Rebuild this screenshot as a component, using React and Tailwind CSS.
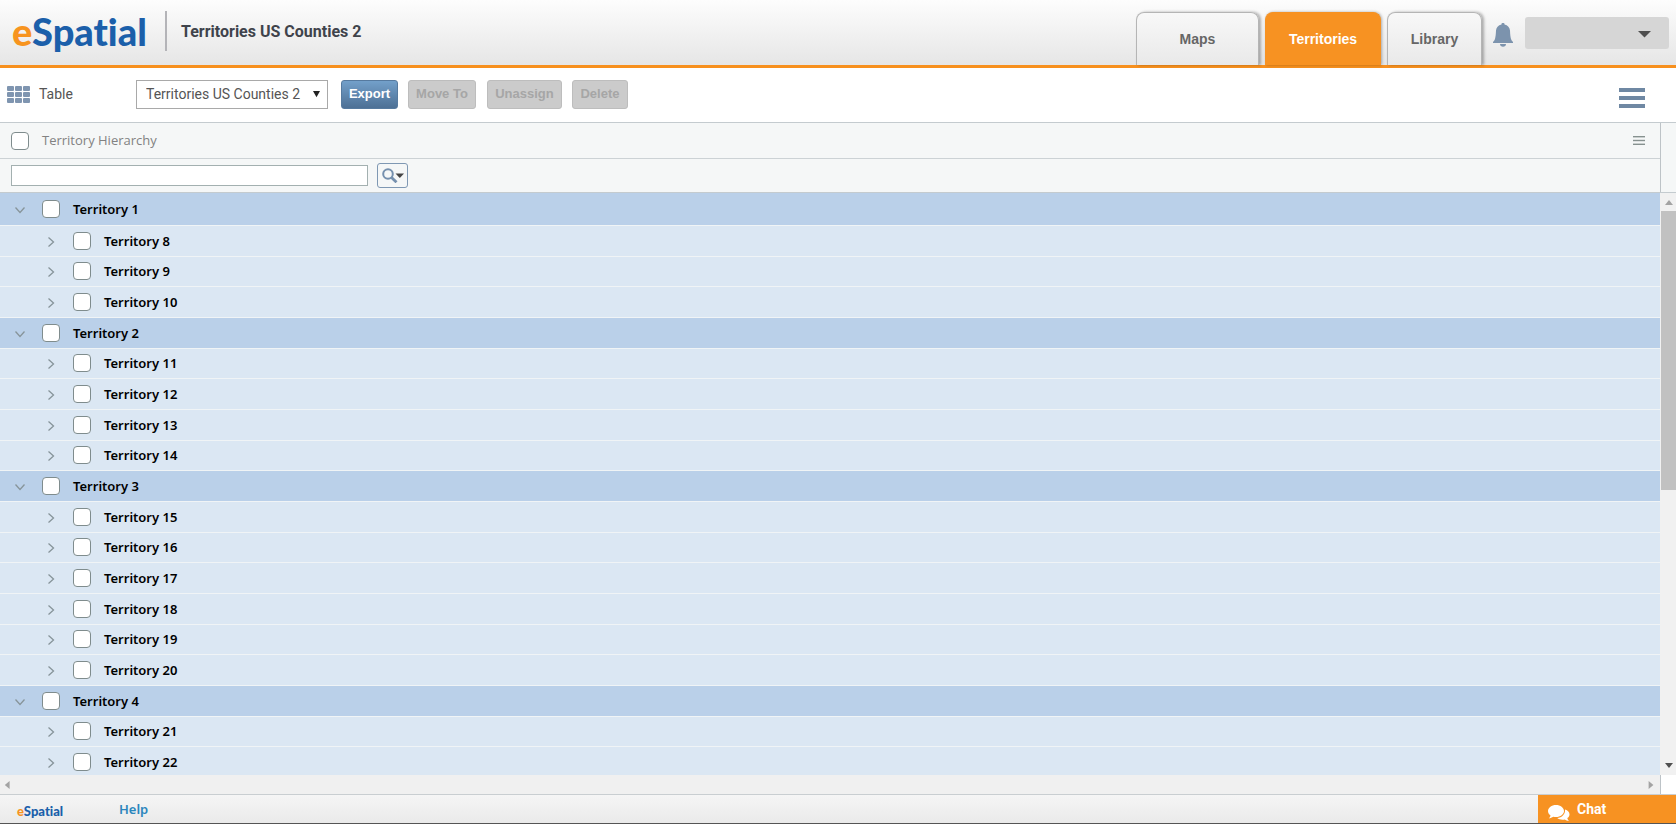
import React, { useState } from 'react';

const territories = [
  { name: 'Territory 1', children: ['Territory 8', 'Territory 9', 'Territory 10'] },
  { name: 'Territory 2', children: ['Territory 11', 'Territory 12', 'Territory 13', 'Territory 14'] },
  {
    name: 'Territory 3',
    children: ['Territory 15', 'Territory 16', 'Territory 17', 'Territory 18', 'Territory 19', 'Territory 20'],
  },
  { name: 'Territory 4', children: ['Territory 21', 'Territory 22'] },
];

const checkboxClass =
  'block shrink-0 appearance-none w-[18px] h-[18px] bg-white border border-[#7f8c8d] rounded-[4px] checked:bg-[#5b84ad]';

function Logo({ className }) {
  return (
    <span className={`font-['Lato',sans-serif] font-black [font-variant-ligatures:none] text-[#1b5faa] ${className}`}>
      <span className="text-[#f7941f]">e</span>Spatial
    </span>
  );
}

function Arrow({ points, className }) {
  return (
    <svg viewBox="0 0 10 10" className={className} aria-hidden="true">
      <polygon points={points} fill="currentColor" />
    </svg>
  );
}

function Tab({ label, active, className }) {
  return (
    <a
      href="#"
      className={`flex items-center justify-center h-[53px] rounded-t-lg font-['Liberation_Sans',Arial,sans-serif] text-sm font-bold ${
        active
          ? 'bg-[#f79222] text-white border border-b-0 border-[#f79222] shadow-[1px_0_3px_rgba(0,0,0,0.3)]'
          : 'bg-linear-to-b from-[#f8f8f8] to-[#e9e9e9] text-[#666] border border-b-0 border-[#b5b5b5] shadow-[2px_0_3px_rgba(0,0,0,0.3)]'
      } ${className}`}
    >
      {label}
    </a>
  );
}

function Header() {
  return (
    <header className="flex items-end justify-between h-[68px] shrink-0 border-b-[3px] border-[#f7901e] bg-linear-to-b from-[#fdfdfd] to-[#e6e6e6]">
      <div className="flex items-center h-full pl-3">
        <Logo className="w-[133px] pb-1 text-[38px] leading-10" />
        <div className="w-0.5 h-10 ml-5 mb-1 bg-[#b4b4b8]" />
        <h1 className="ml-3.5 mb-0.5 font-['Roboto',sans-serif] text-base font-bold text-[#3f434b]">
          Territories US Counties 2
        </h1>
      </div>
      <div className="flex items-end h-full pr-[7px]">
        <nav className="flex gap-[6px]">
          <Tab label="Maps" className="w-[123px]" />
          <Tab label="Territories" active className="w-[116px]" />
          <Tab label="Library" className="w-[95px]" />
        </nav>
        <button type="button" aria-label="Notifications" className="ml-[11px] mb-[18px]">
          <svg viewBox="0 0 20 24" className="w-5 h-6" fill="#7c93ad" aria-hidden="true">
            <path d="M8.500 1C8.500.4 9.100 0 10 0s1.500.4 1.500 1v.4c3.300.8 5.300 3 5.500 6.200.2 4.500.4 6.300 1 8.300.3 1 .9 2 2 3.100v1H0v-1c1.100-1.100 1.700-2.100 2-3.100.6-2 .8-3.800 1-8.300.2-3.200 2.200-5.400 5.500-6.200z" />
            <path d="M7 21h6c0 1.700-1.300 2.800-3 2.800S7 22.700 7 21z" />
          </svg>
        </button>
        <button
          type="button"
          aria-label="Account menu"
          className="flex items-center justify-end w-[144px] h-8 ml-3 mb-4 pr-[18px] rounded-[3px] bg-[#d6d6d6] text-[#4f4f4f]"
        >
          <Arrow points="0,0 10,0 5,5" className="w-[13px] h-[13px] mt-2" />
        </button>
      </div>
    </header>
  );
}

function Toolbar() {
  const disabledClass =
    'h-[29px] rounded-[3px] border border-[#bdbdbd] bg-[#cbcbcb] text-[#a6a6a6] text-[13px] font-bold';
  return (
    <div className="flex items-center h-[54px] shrink-0 pl-[7px] pr-[31px] pb-[2px] bg-white">
      <svg viewBox="0 0 24 17" className="w-6 h-[17px]" fill="#7f95b0" aria-hidden="true">
        {[0, 6, 12].map((y) =>
          [0, 8, 16].map((x) => <rect key={`${x}-${y}`} x={x} y={y} width="7" height="5" rx="1" />)
        )}
      </svg>
      <span className="w-[97px] ml-2 font-['Roboto',sans-serif] text-sm text-[#555]">Table</span>
      <div className="relative flex items-center">
        <select
          aria-label="Territory set"
          className="appearance-none w-[192px] h-[29px] pl-[9px] border border-[#a9a9a9] bg-white font-['Roboto',sans-serif] text-sm text-[#555]"
        >
          <option>Territories US Counties 2</option>
        </select>
        <Arrow points="0,0 10,0 5,9" className="absolute right-2 w-[7px] h-[7px] text-[#222] pointer-events-none" />
      </div>
      <div className="flex font-['Liberation_Sans',Arial,sans-serif]">
        <button
          type="button"
          className="w-[57px] h-[29px] ml-[13px] rounded-[3px] border border-[#567a9f] bg-linear-to-b from-[#73a0ca] to-[#4d7095] text-white text-[13px] font-bold"
        >
          Export
        </button>
        <button type="button" disabled className={`w-[68px] ml-[10px] ${disabledClass}`}>Move To</button>
        <button type="button" disabled className={`w-[75px] ml-[11px] ${disabledClass}`}>Unassign</button>
        <button type="button" disabled className={`w-[56px] ml-[10px] ${disabledClass}`}>Delete</button>
      </div>
      <button type="button" aria-label="Menu" className="flex flex-col gap-1 ml-auto mt-2">
        <span className="w-[26px] h-1 bg-[#6f88a3]" />
        <span className="w-[26px] h-1 bg-[#6f88a3]" />
        <span className="w-[26px] h-1 bg-[#6f88a3]" />
      </button>
    </div>
  );
}

function GridHeader() {
  return (
    <div className="flex shrink-0 border-y border-[#c4cbcf] bg-[#f5f7f7]">
      <div className="flex-1 border-r border-[#bdc3c7]">
        <div className="flex items-center h-9 pl-[11px] pr-[15px] border-b border-[#ccd2d5]">
          <input type="checkbox" id="select-all" className={checkboxClass} />
          <label htmlFor="select-all" className="ml-[13px] font-['Open_Sans',sans-serif] text-[13px] text-[#828282]">
            Territory Hierarchy
          </label>
          <svg viewBox="0 0 12 9" className="w-3 h-[9px] ml-auto" fill="#86918f" aria-hidden="true">
            <rect width="12" height="1.400" />
            <rect y="3.800" width="12" height="1.400" />
            <rect y="7.600" width="12" height="1.400" />
          </svg>
        </div>
        <div className="flex items-center h-[33px] pl-[11px]">
          <input
            type="text"
            aria-label="Filter territories"
            className="w-[357px] h-[21px] px-1 border border-[#a3b0b0] bg-white text-[13px]"
          />
          <button
            type="button"
            aria-label="Filter options"
            className="flex items-center justify-center w-[31px] h-[25px] ml-[9px] border border-[#7f98b3] rounded-[3px]"
          >
            <svg viewBox="0 0 22 15" className="w-[22px] h-[15px]" aria-hidden="true">
              <circle cx="6" cy="6" r="4.800" fill="none" stroke="#7590ae" strokeWidth="2" />
              <path d="M9.500 9.500l5 4.800" stroke="#7590ae" strokeWidth="2.800" />
              <polygon points="13.500,5.500 22,5.500 17.800,10" fill="#444" />
            </svg>
          </button>
        </div>
      </div>
      <div className="w-[15px]" />
    </div>
  );
}

function Row({ row, open, checked, onToggle, onCheck }) {
  return (
    <tr
      className={`h-[31px] nth-[3n]:h-[30px] first:h-8 border-b border-[#f0f4f6] ${
        row.parent ? 'bg-[#bad0e9]' : 'bg-[#dbe7f3]'
      }`}
    >
      <td className="p-0">
        <div className={`flex items-center ${row.parent ? 'pl-[15px]' : 'pl-[46px]'}`}>
          <button type="button" aria-label={`Toggle ${row.name}`} onClick={onToggle} className="mt-0.5">
            <svg viewBox="0 0 10 10" className="w-[10px] h-[10px]" fill="none" stroke="#87949a" strokeWidth="1.300">
              <path d={open ? 'M.5 2.500L5 7.500 9.500 2.500' : 'M2.500.5L7.500 5 2.500 9.500'} />
            </svg>
          </button>
          <input
            type="checkbox"
            id={row.name}
            checked={checked}
            onChange={onCheck}
            className={`ml-[17px] ${checkboxClass}`}
          />
          <label htmlFor={row.name} className="ml-[13px] font-['Noto_Sans',sans-serif] text-[13px] leading-5 font-semibold text-black">
            {row.name}
          </label>
        </div>
      </td>
    </tr>
  );
}

function TerritoryGrid() {
  const [expanded, setExpanded] = useState(territories.map((t) => t.name));
  const [selected, setSelected] = useState([]);

  const toggle = (list, name) => (list.includes(name) ? list.filter((n) => n !== name) : [...list, name]);

  const rows = territories.flatMap((t) => [
    { name: t.name, parent: true },
    ...(expanded.includes(t.name) ? t.children.map((name) => ({ name, parent: false })) : []),
  ]);

  return (
    <div className="flex flex-1 min-h-0">
      <div className="flex flex-col flex-1 min-w-0">
        <div className="flex-1 min-h-0 overflow-hidden">
          <table className="w-full border-collapse">
            <tbody>
              {rows.map((row) => (
                <Row
                  key={row.name}
                  row={row}
                  open={expanded.includes(row.name)}
                  checked={selected.includes(row.name)}
                  onToggle={() => setExpanded(toggle(expanded, row.name))}
                  onCheck={() => setSelected(toggle(selected, row.name))}
                />
              ))}
            </tbody>
          </table>
        </div>
        {/* Horizontal scrollbar */}
        <div className="flex items-center justify-between h-[19px] pl-1 pr-[5px] bg-[#f0f0f0] text-[#a3a3a3]">
          <Arrow points="7,0 7,10 1,5" className="w-2 h-2" />
          <Arrow points="2,0 2,10 8,5" className="w-2 h-2" />
        </div>
      </div>
      {/* Vertical scrollbar */}
      <div className="flex flex-col w-4">
        <div className="flex flex-col items-center flex-1 pl-px bg-[#f1f1f1]">
          <Arrow points="1,8 9,8 5,3" className="w-[10px] h-[10px] my-1 text-[#a3a3a3]" />
          <div className="w-full h-[48%] bg-[#c1c1c1]" />
          <Arrow points="1,2 9,2 5,7" className="w-[10px] h-[10px] mt-auto mb-1 text-[#505050]" />
        </div>
        <div className="h-[19px] border-l border-[#bdc3c7] bg-white" />
      </div>
    </div>
  );
}

function Footer() {
  return (
    <footer className="flex items-center justify-between h-[30px] shrink-0 border-t border-t-[#c9ced1] border-b border-b-[#555] bg-linear-to-b from-[#f5f5f5] to-[#eaeaea]">
      <div className="flex items-center pl-[17px]">
        <Logo className="w-[102px] mt-1 text-[13px] leading-4" />
        <a href="#" className="mt-0.5 font-['Noto_Sans',sans-serif] text-[13px] font-semibold text-[#2b86bd]">
          Help
        </a>
      </div>
      <button
        type="button"
        className="flex items-center w-[138px] h-full pl-[10px] bg-[#f79222] text-white font-['Roboto',sans-serif] text-sm font-bold"
      >
        <svg viewBox="0 0 22 17" className="w-[22px] h-[17px] mt-2" fill="#fff" aria-hidden="true">
          <path d="M8 0c4.400 0 8 2.700 8 6s-3.600 6-8 6c-1 0-1.900-.1-2.700-.3C4 12.600 2.400 13.200.8 13.300c1-.9 1.600-1.800 1.700-2.900C.9 9.300 0 7.700 0 6c0-3.300 3.600-6 8-6z" />
          <path d="M17 4.500c2.900.9 4.500 2.700 4.500 4.900 0 1.500-.8 2.800-2.200 3.700.1 1 .7 1.900 1.600 2.800-1.600-.1-3-.6-4.200-1.500-2.800.6-5.700 0-7.500-1.500C14 12.800 17.500 9 17 4.500z" />
        </svg>
        <span className="ml-[7px]">Chat</span>
      </button>
    </footer>
  );
}

function App() {
  return (
    <div className="flex flex-col h-screen overflow-hidden bg-white">
      <Header />
      <Toolbar />
      <GridHeader />
      <TerritoryGrid />
      <Footer />
    </div>
  );
}

export default App;
